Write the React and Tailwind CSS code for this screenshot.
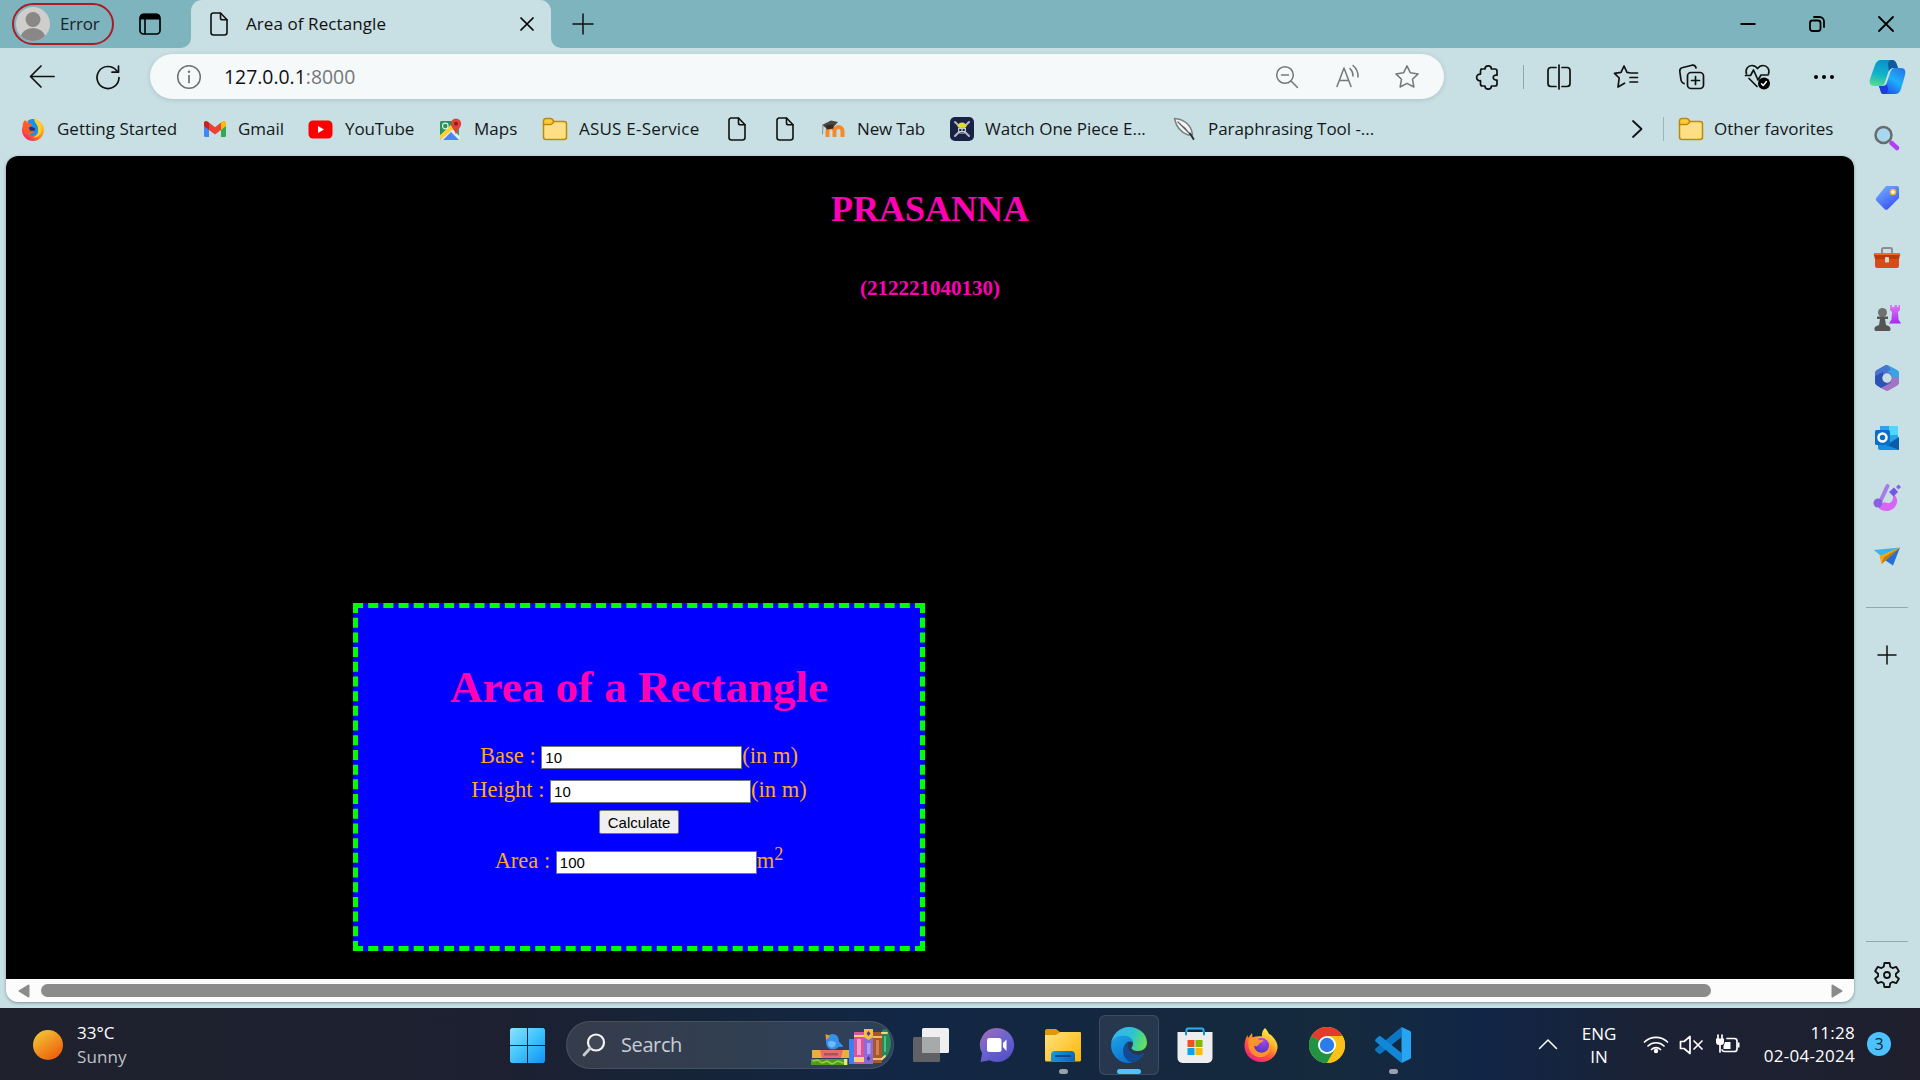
import React from "react";

/* ---------- small helpers ---------- */
function Svg({ w, h = w, vb, className = "", children }) {
  return (
    <svg
      width={w}
      height={h}
      viewBox={vb || `0 0 ${w} ${h}`}
      className={"shrink-0 " + className}
      fill="none"
      stroke="none"
      strokeLinecap="round"
      strokeLinejoin="round"
    >
      {children}
    </svg>
  );
}

/* ---------- browser glyphs ---------- */
const DocIcon = ({ className }) => (
  <Svg w={20} h={26} className={className}>
    <path d="M4 2h7.5L18 8.8V21.500a2.500 2.500 0 0 1-2.500 2.500h-11A2.500 2.500 0 0 1 2 21.500V4.500A2.500 2.500 0 0 1 4 2z" stroke="#111" strokeWidth="1.600" />
    <path d="M11.500 2.200V7A1.800 1.800 0 0 0 13.300 8.800H18" stroke="#111" strokeWidth="1.600" />
  </Svg>
);

const FolderIcon = ({ className }) => (
  <Svg w={26} h={24} className={className}>
    <rect x="1.500" y="4.500" width="23" height="18" rx="2.500" fill="#ffdf85" stroke="#bd8b0b" strokeWidth="1.500" />
    <path d="M1.500 7.500V4A2.500 2.500 0 0 1 4 1.500h4.500a2.500 2.500 0 0 1 2 1l1.500 2-2 2.300a2.500 2.500 0 0 1-1.800.7z" fill="#ffca38" stroke="#bd8b0b" strokeWidth="1.500" />
  </Svg>
);

const FirefoxIcon = ({ size, id, className }) => (
  <Svg w={size} vb="0 0 36 36" className={className}>
    <defs>
      <linearGradient id={id + "a"} x1="28" y1="4" x2="8" y2="34" gradientUnits="userSpaceOnUse">
        <stop offset="0" stopColor="#fff04a" />
        <stop offset=".3" stopColor="#ffb52e" />
        <stop offset=".6" stopColor="#ff5a36" />
        <stop offset="1" stopColor="#f3188b" />
      </linearGradient>
      <radialGradient id={id + "b"} cx="20" cy="13" r="12" gradientUnits="userSpaceOnUse">
        <stop offset="0" stopColor="#a54bf0" />
        <stop offset="1" stopColor="#5a35c8" />
      </radialGradient>
    </defs>
    <path d="M22 1c2 2 3 4 4 6 1 0 2 1 3 2 4 4 6 8 5.500 12C33.500 29 27 35 18.500 35 9 35 1.500 28 1.500 19c0-4 1-8 3-11l.5 3 4-5 .5 4.500c1.500-1 3-1 4.500-1 2-.5 4-.5 5 0-.5-3 .5-6 3-8.500z" fill={`url(#${id}a)`} />
    <circle cx="18.500" cy="18.500" r="7.500" fill={`url(#${id}b)`} />
    <path d="M6 12c3-2 6-2 8.500 0 2 .8 4 .5 6 1.200-1 2-3 2.500-4.500 3.500-1 3.500-4 2.500-5 2 0 4 3.500 7 7.500 7 5 0 9-4 8-9.500 3 7-1.500 14-9 14C9.500 30 3 22 6 12z" fill="#ff9a2a" opacity=".9" />
  </Svg>
);

const OldFirefoxIcon = () => (
  <Svg w={24} h={25} vb="0 0 24 25" className="ml-[21px]">
    <defs>
      <linearGradient id="offa" x1="20" y1="3" x2="4" y2="22" gradientUnits="userSpaceOnUse">
        <stop offset="0" stopColor="#ffd93a" />
        <stop offset=".5" stopColor="#ff8a1c" />
        <stop offset="1" stopColor="#f21d6d" />
      </linearGradient>
    </defs>
    <circle cx="12" cy="13" r="11" fill="url(#offa)" />
    <path d="M7 4C11 0 18 2 19 9c0 5-2 9-7 10-4 0-6-3-5-6z" fill="#1592f0" />
    <path d="M13 1c4 2 8 6 7.500 12-.5 5-4 8-9 7.500 4-1 6-4 5.500-7.500C18 8 13 6 13 1z" fill="#ffcf2e" />
    <path d="M2 6l2-3 2 3c2 0 4 0 5 2-1 1-1.500 2-3.500 2 0 3 2 4 5 3.500 1 1.500-1 4-4 4C4 17 1 13 2 6z" fill="#ff5a28" />
    <path d="M8 11c1-1.500 3-1.500 4-.5 2 0 2.500 1.500 2 3-2-.5-3 1-5 0z" fill="#24337c" />
  </Svg>
);

const GmailIcon = () => (
  <Svg w={24} h={18} className="ml-[25px]">
    <path d="M1 3v12.500A1.500 1.500 0 0 0 2.500 17H6V7z" fill="#4285f4" />
    <path d="M23 3v12.500a1.500 1.500 0 0 1-1.500 1.500H18V7z" fill="#34a853" />
    <path d="M18 2.500l2-1.200c1.500-1 3 0 3 1.700V6l-5 4z" fill="#fbbc04" />
    <path d="M6 2.500L4 1.300C2.500.3 1 1.300 1 3v3l5 4z" fill="#c5221f" />
    <path d="M6 2.500l6 4.700 6-4.700V10l-6 4.600L6 10z" fill="#ea4335" />
  </Svg>
);

const YouTubeIcon = () => (
  <Svg w={25} h={19} className="ml-[24px]">
    <rect x=".5" y=".5" width="24" height="18" rx="4.500" fill="#f00" />
    <path d="M10 6v7l6-3.500z" fill="#fff" />
  </Svg>
);

const MapsIcon = () => (
  <Svg w={23} h={23} className="ml-[25px]">
    <rect x="1" y="3" width="19" height="19" rx="2" fill="#34a853" />
    <path d="M1.500 21.500L13 10l8 9v1a2 2 0 0 1-2 2H3z" fill="#e9edf0" />
    <path d="M4 22l8-8 8 8z" fill="#4a86f5" />
    <path d="M1 17L16 3l3 4L2 21.500A2 2 0 0 1 1 20z" fill="#ffcf34" />
    <path d="M1 5a2 2 0 0 1 2-2h13L1 17z" fill="#23965a" />
    <circle cx="6.300" cy="8" r="2.800" stroke="#dff1e6" strokeWidth="1.200" />
    <path d="M17 .5a5.200 5.200 0 0 1 5.200 5.200c0 3.500-4.200 6-5.200 11-1-5-5.200-7.500-5.200-11A5.200 5.200 0 0 1 17 .5z" fill="#e0433a" />
    <circle cx="17" cy="5.700" r="1.900" fill="#8c1c17" />
  </Svg>
);

const MoodleIcon = () => (
  <Svg w={25} h={20} className="ml-[26px]">
    <path d="M6.500 18v-6a3.300 3.300 0 0 1 7 0v6m0-6a3.700 3.700 0 0 1 8 0v6" stroke="#f58a2c" strokeWidth="4" strokeLinecap="butt" />
    <path d="M1 6l9-4.500L17 3l-5 5.500-7 .5z" fill="#4b4541" />
    <path d="M5 6.500l7-1 .5 4-7 1z" fill="#2e2a28" />
    <path d="M2 6.500L1.500 15" stroke="#9b8d80" strokeWidth="1" />
  </Svg>
);

const PirateIcon = () => (
  <Svg w={24} h={24} className="ml-[25px]">
    <rect width="24" height="24" rx="5" fill="#182244" />
    <path d="M5 5l14 14M19 5L5 19" stroke="#b4b9bf" strokeWidth="2" />
    <path d="M8 9a4 3.500 0 0 1 8 0l.8 1H7.200z" fill="#e5dc33" />
    <path d="M8 10.500h8v3.500L14 17h-4l-2-3z" fill="#c9cdd0" />
    <path d="M10 13h.6m2.800 0h.6" stroke="#182244" strokeWidth="2" />
    <path d="M10.500 16h3" stroke="#182244" strokeWidth="1" />
  </Svg>
);

const QuillIcon = () => (
  <Svg w={23} h={24} className="ml-[26px]">
    <path d="M1.500 1.500C10 2 18 7 19.500 17.500L15 18C7 15 3 9 1.500 1.500z" fill="#f4f6f6" stroke="#7b8082" strokeWidth="1.500" />
    <path d="M5 5l14 14M8 8c3 2 5 4 7 7" stroke="#5c6163" strokeWidth="1.300" />
    <path d="M17 16.500l3.500 5.500" stroke="#2e3234" strokeWidth="2" />
  </Svg>
);

/* ---------- tab strip ---------- */
function TabStrip() {
  return (
    <header className="flex h-12 shrink-0 items-center bg-[#7eb4be]">
      <div className="ml-[12px] flex h-[42px] w-[102px] shrink-0 items-center rounded-full border-2 border-[#ab1d26]">
        <Svg w={34} vb="0 0 34 34" className="ml-[2px]">
          <defs>
            <clipPath id="face"><circle cx="17" cy="17" r="17" /></clipPath>
          </defs>
          <circle cx="17" cy="17" r="17" fill="#d0cecc" />
          <g clipPath="url(#face)" fill="#8a8886">
            <circle cx="17" cy="12.500" r="7.500" />
            <ellipse cx="17" cy="30" rx="12" ry="9" />
          </g>
        </Svg>
        <span className="ml-[10px] text-[17px] tracking-[-0.2px] text-[#202124]">Error</span>
      </div>
      <Svg w={22} h={22} className="ml-[25px]">
        <rect x="1" y="1.500" width="20" height="19.500" rx="3.500" stroke="#000" strokeWidth="1.700" />
        <path d="M1 6.500V4a3.500 3.500 0 0 1 3.500-3.500h13A3.500 3.500 0 0 1 21 4v2.500z" fill="#000" />
        <path d="M6 6v14.500" stroke="#000" strokeWidth="1.600" />
      </Svg>
      <div className="ml-[20px] flex h-12 w-[380px] shrink-0">
        <div className="w-[10px] bg-[#c8dfe3]"><div className="h-12 rounded-br-[10px] bg-[#7eb4be]" /></div>
        <div className="flex h-12 w-[360px] items-center rounded-t-[11px] bg-[#c8dfe3]">
          <DocIcon className="ml-[18px]" />
          <span className="ml-[17px] w-[274px] text-[17px] tracking-[0.08px] text-[#111]">Area of Rectangle</span>
          <Svg w={14}><path d="M1 1l12 12M13 1L1 13" stroke="#000" strokeWidth="1.700" /></Svg>
        </div>
        <div className="w-[10px] bg-[#c8dfe3]"><div className="h-12 rounded-bl-[10px] bg-[#7eb4be]" /></div>
      </div>
      <Svg w={22} className="ml-[11px]"><path d="M11 1v20M1 11h20" stroke="#111" strokeWidth="1.500" /></Svg>
      <div className="mr-[26px] ml-auto flex items-center gap-[53px]">
        <Svg w={16}><path d="M.5 8h15" stroke="#000" strokeWidth="2" strokeLinecap="butt" /></Svg>
        <Svg w={16}>
          <rect x="1" y="4.500" width="10.500" height="10.500" rx="2.500" stroke="#000" strokeWidth="1.800" />
          <path d="M5 1h5.500A4.500 4.500 0 0 1 15 5.500V11" stroke="#000" strokeWidth="1.800" />
        </Svg>
        <Svg w={16}><path d="M1 1l14 14M15 1L1 15" stroke="#000" strokeWidth="1.800" /></Svg>
      </div>
    </header>
  );
}

/* ---------- address bar row ---------- */
function Toolbar() {
  return (
    <div className="flex h-[57px] shrink-0 items-center">
      <Svg w={26} className="ml-[29px]"><path d="M12 2L1.500 12.500 12 23M2 12.500h23" stroke="#111" strokeWidth="1.700" /></Svg>
      <Svg w={26} className="ml-[40px]">
        <path d="M24 13.500A11 11 0 1 1 21.500 6.500L23 8" stroke="#111" strokeWidth="1.700" />
        <path d="M23.500 2v6.200H17" stroke="#111" strokeWidth="1.700" />
      </Svg>
      <div className="ml-[29px] flex h-[45px] w-[1294px] shrink-0 items-center rounded-full bg-[#f5f9fa] shadow-[0_1px_4px_rgba(70,120,130,0.25)]">
        <Svg w={26} className="ml-[26px]">
          <circle cx="13" cy="13" r="11.300" stroke="#6d7072" strokeWidth="1.500" />
          <path d="M13 11.500v7" stroke="#6d7072" strokeWidth="1.700" />
          <circle cx="13" cy="7.800" r="1.200" fill="#6d7072" />
        </Svg>
        <span className="ml-[22px] text-[19.400px] text-[#111]">127.0.0.1<span className="text-[#75787a]">:8000</span></span>
        <div className="mr-[24px] ml-auto flex items-center">
          <Svg w={24}>
            <circle cx="10" cy="10" r="8.300" stroke="#75787a" strokeWidth="1.500" />
            <path d="M6.500 10h7M16 16l6.500 6.500" stroke="#75787a" strokeWidth="1.500" />
          </Svg>
          <Svg w={26} className="ml-[36px]">
            <path d="M2 22.500L9 4 16 22.500M4.300 16.500h9.500" stroke="#75787a" strokeWidth="1.500" />
            <path d="M15 4.500A10 10 0 0 1 18 12M18 1.500A14 14 0 0 1 23 13" stroke="#75787a" strokeWidth="1.500" />
          </Svg>
          <Svg w={26} className="ml-[33px]">
            <path d="M13 1.800l3.400 7 7.700 1.100-5.600 5.400 1.400 7.700L13 19.300 6.100 23l1.400-7.700L1.900 9.900l7.700-1.100z" stroke="#75787a" strokeWidth="1.500" />
          </Svg>
        </div>
      </div>
      <Svg w={26} className="ml-[31px]">
        <path d="M6 5h4a3.200 3.200 0 1 1 6.400 0H20a2 2 0 0 1 2 2v4.200c-5-1-5 5.600 0 4.800V20a2 2 0 0 1-2 2h-3.600a3.200 3.200 0 1 1-6.400 0H7.500a2 2 0 0 1-2-2v-3.300a3.300 3.300 0 1 1 0-6.500V7A2 2 0 0 1 7 5" stroke="#111" strokeWidth="1.700" />
      </Svg>
      <div className="ml-[22px] h-6 w-px bg-[#8fa6ab]" />
      <Svg w={26} className="ml-[22px]">
        <path d="M10 3.500H5A3 3 0 0 0 2 6.500v13a3 3 0 0 0 3 3h5M16 3.500h5a3 3 0 0 1 3 3v13a3 3 0 0 1-3 3h-5M13 1v24" stroke="#111" strokeWidth="1.700" />
      </Svg>
      <Svg w={26} className="ml-[41px]">
        <path d="M18 9l-4-.6L11 2 8 8.400l-6.500 1L6.200 14 5 23l6.500-3.800M17 13.500h7.500M17 18h7.500M19 9h5.500M6.200 14" stroke="#111" strokeWidth="1.700" />
      </Svg>
      <Svg w={28} className="ml-[39px]">
        <rect x="9.500" y="9.500" width="16" height="16" rx="3.500" stroke="#111" strokeWidth="1.700" />
        <path d="M17.500 13.500v8M13.500 17.500h8M6 20.500l-1-.5a4 4 0 0 1-2-3L1.800 8.500a3.500 3.500 0 0 1 3-4L14 2.200a3.500 3.500 0 0 1 4 2.800" stroke="#111" strokeWidth="1.700" />
      </Svg>
      <Svg w={28} className="ml-[38px]">
        <path d="M2.500 11C1 6 4 2.500 8 2.500c2.500 0 4 1 5.500 3C15 3.500 16.500 2.500 19 2.500c4 0 7 3.500 5.500 8.500M5 15.500l8 8" stroke="#111" strokeWidth="1.700" />
        <path d="M1.500 12.500h5L9.500 7l4.500 10 3-5h7" stroke="#111" strokeWidth="1.700" />
        <circle cx="20" cy="20.500" r="6" fill="#000" />
        <path d="M17.500 20.800l1.700 1.700 3.200-4" stroke="#fff" strokeWidth="1.500" />
      </Svg>
      <Svg w={22} h={6} className="ml-[41px]"><g fill="#000"><circle cx="3" cy="3" r="2" /><circle cx="11" cy="3" r="2" /><circle cx="19" cy="3" r="2" /></g></Svg>
    </div>
  );
}

/* ---------- favourites bar ---------- */
function Bookmarks() {
  return (
    <div className="flex h-[51px] shrink-0 items-center pb-[3px] text-[17px] whitespace-nowrap text-[#15181a]">
      <OldFirefoxIcon />
      <span className="ml-[12px] w-[121px]">Getting Started</span>
      <GmailIcon />
      <span className="ml-[11px] w-[46px]">Gmail</span>
      <YouTubeIcon />
      <span className="ml-[12px] w-[69px] tracking-[-0.1px]">YouTube</span>
      <MapsIcon />
      <span className="ml-[12px] w-[44px]">Maps</span>
      <FolderIcon className="ml-[24px]" />
      <span className="ml-[11px] w-[121px] tracking-[0.22px]">ASUS E-Service</span>
      <DocIcon className="ml-[27px]" />
      <DocIcon className="ml-[28px]" />
      <MoodleIcon />
      <span className="ml-[11px] w-[68px] tracking-[-0.15px]">New Tab</span>
      <PirateIcon />
      <span className="ml-[11px] w-[162px]">Watch One Piece E...</span>
      <QuillIcon />
      <span className="ml-[12px] w-[166px] tracking-[-0.05px]">Paraphrasing Tool -...</span>
      <Svg w={12} h={20} className="ml-[257px]"><path d="M2 2l8.500 8L2 18" stroke="#111" strokeWidth="1.800" /></Svg>
      <div className="ml-[20px] h-6 w-px bg-[#9fb4b8]" />
      <FolderIcon className="ml-[14px]" />
      <span className="ml-[10px]">Other favorites</span>
    </div>
  );
}

/* ---------- web page ---------- */
function Field({ label, value, unit }) {
  return (
    <div className="flex items-baseline justify-center">
      <span className="whitespace-pre">{label + " : "}</span>
      <input
        readOnly
        value={value}
        className="h-[23px] w-[201px] border border-[#767676] bg-white px-[3px] font-['Liberation_Sans',sans-serif] text-[15px] leading-[21px] text-black"
      />
      {unit}
    </div>
  );
}

function WebPage() {
  return (
    <div className="flex min-h-0 flex-1 flex-col overflow-hidden rounded-xl bg-[#fcfcfc] [font-family:'Liberation_Serif',serif] shadow-[0_1px_3px_rgba(40,80,90,0.5)]">
      <div className="h-[823px] shrink-0 bg-black">
        <h1 className="pt-[33px] text-center text-[36px] leading-[41px] font-bold text-[#ff00b4]">PRASANNA</h1>
        <h3 className="mt-[46px] text-center text-[21px] leading-6 font-bold text-[#ff00b4]">(212221040130)</h3>
        <section className="mt-[303px] ml-[347px] h-[348px] w-[572px] border-[5px] border-dashed border-[#0f0] bg-[#00f] text-[22.500px] leading-[26px] text-[#ffa81e]">
          <h1 className="mt-[53px] text-center text-[45px] leading-[52px] font-bold text-[#ff00b4]">Area of a Rectangle</h1>
          <div className="mt-[30px]"><Field label="Base" value="10" unit="(in m)" /></div>
          <div className="mt-[8px]"><Field label="Height" value="10" unit="(in m)" /></div>
          <div className="mt-[7px] flex justify-center">
            <button className="h-[24px] w-[80px] rounded-[2px] border border-[#767676] bg-[#efefef] font-['Liberation_Sans',sans-serif] text-[15px] leading-[21px] text-black">Calculate</button>
          </div>
          <div className="mt-[14px]">
            <Field label="Area" value="100" unit={<span>m<span className="relative -top-[8px] text-[18px] leading-none">2</span></span>} />
          </div>
        </section>
      </div>
      <div className="flex h-[23px] shrink-0 items-center">
        <Svg w={12} h={14} className="ml-[12px]"><path d="M10.500 1.500v11L1.500 7z" fill="#8b8b8b" stroke="#8b8b8b" strokeWidth="2" /></Svg>
        <div className="ml-[11px] h-[13px] w-[1670px] shrink-0 rounded-full bg-[#8b8b8b]" />
        <Svg w={12} h={14} className="mr-[11px] ml-auto"><path d="M1.500 1.500v11l9-5.500z" fill="#8b8b8b" stroke="#8b8b8b" strokeWidth="2" /></Svg>
      </div>
    </div>
  );
}

/* ---------- Edge sidebar ---------- */
const sidebarIcons = [
  <g key="search">
    <path d="M18.500 19l5.500 5" stroke="#b43df5" strokeWidth="4.500" />
    <circle cx="10.500" cy="11" r="8" fill="#a6d8f0" stroke="#6b6b6b" strokeWidth="2.500" />
  </g>,
  <g key="tag">
    <path d="M13 2h11a2 2 0 0 1 2 2v10L15 25a2.500 2.500 0 0 1-3.500 0l-8-8a2.500 2.500 0 0 1 0-3.500z" fill="url(#sbTag)" />
    <circle cx="20" cy="8" r="2.500" fill="#fff" stroke="#f3bd1c" strokeWidth="1.600" />
  </g>,
  <g key="tools">
    <path d="M9 9V5.500A1.500 1.500 0 0 1 10.500 4h7A1.500 1.500 0 0 1 19 5.500V9" stroke="#8c8f91" strokeWidth="2" />
    <path d="M2 14h24v8a2 2 0 0 1-2 2H4a2 2 0 0 1-2-2z" fill="#d84b18" />
    <path d="M2 9h24a1.500 1.500 0 0 1 1.200 1.500L26 15H2L.8 10.500A1.500 1.500 0 0 1 2 9z" fill="#ba3b0c" />
    <path d="M1 9h26v2H1z" fill="#ee6a26" />
    <rect x="12" y="13" width="4" height="5.500" rx="1" fill="#d5d5d5" />
  </g>,
  <g key="games">
    <path d="M17 1h2v2h2.500V1H24v2h1.500V1H27v5l-2 2 .5 7.500 2.500 4H16l2.500-4L19 8l-2-2z" fill="url(#sbRook)" />
    <circle cx="9.500" cy="8.500" r="4.500" fill="#707070" />
    <path d="M4 12.500h11v2.500h-3l1 6c3 1 5 2 4.500 4.500a1.500 1.500 0 0 1-1.500 1.500H3a1.500 1.500 0 0 1-1.500-1.500C1 23 3 22 6 21l1-6H4z" fill="#555" />
  </g>,
  <g key="m365">
    <path d="M14 1l9.500 5A4 4 0 0 1 26 9.500v8.500a4 4 0 0 1-2 3.500L16 26a4 4 0 0 1-4 0l-8-4.500A4 4 0 0 1 2 18V9.500A4 4 0 0 1 4 6l8-4.500a4 4 0 0 1 2-.5z" fill="#6a62bd" />
    <path d="M12 1.500a4 4 0 0 1 3.500 0L24 6a4 4 0 0 1 2 3.500V16l-7-2.500-1-4-4.500-2z" fill="#38a4e6" />
    <path d="M12 1.500L4 6a4 4 0 0 0-2 3.500V18l5 2.500 3-2V10l8-4.500-4-4.500z" fill="#4576d2" />
    <path d="M2 12v6a4 4 0 0 0 2 3.500L8 24l7-4-5-3V8z" fill="#2f53b5" />
    <path d="M26 14v4a4 4 0 0 1-2 3.500L16 26a4 4 0 0 1-4 0l-4-2 10-5 1-6z" fill="#a374c4" />
    <circle cx="14" cy="14" r="4.700" fill="#c8dfe3" />
  </g>,
  <g key="outlook">
    <rect x="7" y="2" width="18" height="20" fill="#27a7ea" />
    <path d="M16 2h9v9h-9z" fill="#4fd8ff" />
    <path d="M5 13l11 6 10-6v13H7a2 2 0 0 1-2-2z" fill="#168de0" />
    <path d="M26 13L14 21l12 5z" fill="#0b5ca8" />
    <rect x="2" y="6" width="15" height="15" rx="1.500" fill="#0870c9" />
    <circle cx="9.500" cy="13.500" r="4" stroke="#fff" strokeWidth="2.500" />
  </g>,
  <g key="designer">
    <path d="M20 10c7 4 5 15-5 17-6 .5-10-2-11-7 6 2 6-4 10-1 4 1 7-3 6-9z" fill="#d766f4" />
    <path d="M14.500 2L7.500 17" stroke="#a57ce8" strokeWidth="4" />
    <circle cx="5" cy="19" r="4.500" fill="#8a5fe0" />
    <path d="M21 3.500l4 4.500-4.500 4.500-4.500-4.500z" fill="#7656e8" />
    <path d="M25.500.5L28 3l-2.500 2.500L23 3z" fill="#8363ef" />
  </g>,
  <g key="drop">
    <path d="M1 6l26-2.500L8 12z" fill="#39b5ee" />
    <path d="M27 3.500L20 21.500l-9-6z" fill="#2470d8" />
    <path d="M27 3.500L6.500 12 8.500 20l4.500-4z" fill="#f4a60e" />
    <path d="M11 13.500L27 3.500 13 16l-4.500 4z" fill="#c47a0a" />
  </g>,
];

function Sidebar() {
  return (
    <aside className="flex w-[60px] shrink-0 flex-col items-center pr-[6px]">
      <Svg w={38} h={36} className="mt-[11px] ml-[2px]" vb="0 0 38 36">
        <defs>
          <linearGradient id="cpA" x1="14" y1="1" x2="8" y2="28" gradientUnits="userSpaceOnUse">
            <stop offset="0" stopColor="#0a8fd0" /><stop offset=".55" stopColor="#12b5c8" /><stop offset="1" stopColor="#5edc8b" />
          </linearGradient>
          <linearGradient id="cpB" x1="34" y1="8" x2="16" y2="34" gradientUnits="userSpaceOnUse">
            <stop offset="0" stopColor="#2a6fe4" /><stop offset=".5" stopColor="#1eb0fb" /><stop offset="1" stopColor="#1d4ede" />
          </linearGradient>
          <linearGradient id="sbTag" x1="4" y1="4" x2="18" y2="26" gradientUnits="userSpaceOnUse">
            <stop offset="0" stopColor="#6fb0ff" /><stop offset="1" stopColor="#3b50f2" />
          </linearGradient>
          <linearGradient id="sbRook" x1="20" y1="1" x2="22" y2="20" gradientUnits="userSpaceOnUse">
            <stop offset="0" stopColor="#df7bf5" /><stop offset="1" stopColor="#a723f2" />
          </linearGradient>
        </defs>
        <path d="M12 1h11c3 0 4 2 5 5l1 3h-5c-3 0-4 2-5 5l-3 9c-1 3-2 4-5 4H5c-4 0-5-3-4-7L6 6c1-3 3-5 6-5z" fill="url(#cpA)" />
        <path d="M23 1c3 0 4 2 5 5l1 3h-5c-2 0-3 1-4 3l-1-6c0-3 1-5 4-5z" fill="#10599c" />
        <path d="M26 35H15c-3 0-3-2-4-5l-1-3c5 0 7 0 8-4l3-9c1-3 2-5 5-5h6c4 0 5 3 4 7l-4 14c-1 3-3 5-6 5z" fill="url(#cpB)" />
        <path d="M15 35c-3 0-3-2-4-5l-1-3h4c2 0 3 0 4-2l1 5c0 3-1 5-4 5z" fill="#1c3fd0" />
      </Svg>
      <div className="mt-[29px] flex flex-col items-center gap-[32px] pr-px">
        {sidebarIcons.map((icon) => (
          <Svg key={icon.key} w={28}>{icon}</Svg>
        ))}
      </div>
      <div className="mt-[35px] h-px w-[42px] shrink-0 bg-[#93a9ae]" />
      <Svg w={20} className="mt-[37px] mr-px"><path d="M10 1v18M1 10h18" stroke="#111" strokeWidth="1.500" /></Svg>
      <div className="mt-auto h-px w-[42px] shrink-0 bg-[#93a9ae]" />
      <Svg w={28} vb="0 0 28 28" className="mt-[19px] mb-[19px]">
        <path d="M11.400 2h5.200l.7 3.800 2.200 1.300L23.200 5.800l2.700 4.500-3 2.500v2.500l3 2.400-2.700 4.500-3.700-1.300-2.200 1.300-.7 3.800h-5.200l-.7-3.800-2.200-1.300-3.700 1.300-2.700-4.500 3-2.400v-2.500l-3-2.500 2.700-4.500 3.700 1.300 2.200-1.300z" stroke="#111" strokeWidth="1.800" />
        <circle cx="14" cy="14" r="3" stroke="#111" strokeWidth="1.800" />
      </Svg>
    </aside>
  );
}

/* ---------- Windows taskbar ---------- */
const Books = () => (
  <Svg w={82} h={38} vb="0 0 82 38" className="mt-[3px] mr-[1px] ml-auto">
    <path d="M1 31h37v6H1z" fill="#4e9a22" />
    <path d="M3 33l5-1 4 3 5-2 5 3 6-3 5 2" stroke="#8bd53c" strokeWidth="1.500" />
    <path d="M34 31h3v6h-3z" fill="#f2dd90" />
    <path d="M2 22h37v8H2z" fill="#e8b13c" />
    <path d="M10 22h23l-2 8H12z" fill="#e96a72" />
    <path d="M14 25h14v2.500H14z" fill="#9b5a55" />
    <path d="M16 14c-.5-4 2-8 6.500-8C27 6 29 9.500 29 13.500c1 1.500 2.500 3 4.500 4.500-2 1.500-4 1-5 1-1 1.500-3.500 2.500-6 2.500-4 0-6.500-3-6.500-7.500z" fill="#358fea" />
    <path d="M18 15c1-3 5-3 8 0 0 3-3 5-5 4.500S18 17 18 15z" fill="#6cb9fb" />
    <path d="M15.500 6l4.500 2-4 4z" fill="#f39b22" />
    <rect x="39" y="11" width="5" height="25" fill="#3c7ff0" />
    <rect x="44" y="4" width="10" height="32" fill="#d9549c" />
    <path d="M44 7h10v2H44zM44 29h10v5H44z" fill="#f6cf77" />
    <rect x="47" y="11" width="4" height="16" fill="#f0a1cb" />
    <rect x="54" y="1" width="9" height="35" fill="#8a6bd8" />
    <path d="M54 1h9v8l-4.500 3L54 9z" fill="#f2c23a" />
    <path d="M58.500 3l2 2.500-2 2.500-2-2.500zM58.500 28l2 2.500-2 2.500-2-2.500z" fill="#533894" />
    <rect x="57" y="15" width="3.500" height="11" fill="#b79df0" />
    <rect x="63" y="4" width="9" height="31" fill="#a9562b" />
    <path d="M63 8h9v2h-9zM63 30h9v2h-9z" fill="#efbb6c" />
    <rect x="66" y="12" width="3" height="15" fill="#d4804f" />
    <path d="M72 2l4-1c3 3 5 9 5 14 0 7-3 12-6 15l-3 1z" fill="#27885a" />
    <path d="M72 5h5M72 31l3-3" stroke="#e6dc8f" strokeWidth="2" />
    <path d="M75 9v14" stroke="#4fbf86" strokeWidth="2" />
  </Svg>
);

function AppSlot({ active, indicator, children }) {
  return (
    <div className={"relative flex h-[60px] w-[60px] shrink-0 items-center justify-center rounded-md " + (active ? "border border-white/10 bg-white/[0.08]" : "")}>
      {children}
      {indicator === "wide" && <div className="absolute bottom-0 h-[5px] w-6 rounded-full bg-[#4cc2ff]" />}
      {indicator === "dot" && <div className="absolute bottom-[1px] h-[5px] w-[9px] rounded-full bg-[#9aa1ab]" />}
    </div>
  );
}

function Taskbar() {
  return (
    <footer className="flex h-[72px] shrink-0 items-center bg-[linear-gradient(90deg,#1f212d_0%,#1d2030_25%,#162438_36%,#122745_47%,#14273f_58%,#152a3d_70%,#112647_77%,#1b2234_86%,#1f1f2d_100%)] pt-[2px] text-white">
      <Svg w={30} className="ml-[33px]">
        <defs>
          <linearGradient id="sun" x1="5" y1="3" x2="22" y2="27" gradientUnits="userSpaceOnUse">
            <stop offset="0" stopColor="#f2c035" /><stop offset="1" stopColor="#ee650c" />
          </linearGradient>
        </defs>
        <circle cx="15" cy="15" r="15" fill="url(#sun)" />
      </Svg>
      <div className="ml-[14px] w-[433px] text-[17px] leading-6">
        <div>33°C</div>
        <div className="tracking-[0.1px] text-[#bfc2c8]">Sunny</div>
      </div>
      <Svg w={35}>
        <defs>
          <linearGradient id="win" x1="0" y1="0" x2="35" y2="35" gradientUnits="userSpaceOnUse">
            <stop offset="0" stopColor="#8be2ff" /><stop offset=".5" stopColor="#3fc3fb" /><stop offset="1" stopColor="#0d93f7" />
          </linearGradient>
        </defs>
        <path d="M1.500 0H17v17H0V1.500zM18 0h15.500L35 1.500V17H18zM0 18h17v17H1.500L0 33.500zM18 18h17v15.500L33.500 35H18z" fill="url(#win)" />
      </Svg>
      <div className="ml-[21px] flex h-12 w-[328px] shrink-0 items-center rounded-full border border-white/10 bg-white/[0.12]">
        <Svg w={24} className="ml-[15px]">
          <circle cx="14" cy="9.500" r="8" fill="#ffffff10" stroke="#f2f3f5" strokeWidth="2.200" />
          <path d="M8 15.500L2 22" stroke="#c9ccd2" strokeWidth="2.800" />
        </Svg>
        <span className="ml-[15px] text-[20px] tracking-[-0.4px] text-[#c9ced6]">Search</span>
        <Books />
      </div>
      <div className="ml-[7px] flex items-center gap-[6px]">
        <AppSlot>
          <Svg w={36}>
            <rect x="9" y="1" width="27" height="25" rx="1.500" fill="#efefef" />
            <rect y="10" width="27" height="25" rx="1.500" fill="#5f6164" />
            <path d="M9 10h18v16H9z" fill="#a8a9aa" />
          </Svg>
        </AppSlot>
        <AppSlot>
          <Svg w={36}>
            <defs>
              <linearGradient id="chat" x1="4" y1="4" x2="24" y2="34" gradientUnits="userSpaceOnUse">
                <stop offset="0" stopColor="#9d6ab8" /><stop offset=".5" stopColor="#6b64cf" /><stop offset="1" stopColor="#5552c8" />
              </linearGradient>
            </defs>
            <path d="M18 1a17 17 0 1 1-7.500 32.200L1.500 35l1.700-8.500A17 17 0 0 1 18 1z" fill="url(#chat)" />
            <rect x="8" y="11" width="14.500" height="14" rx="2.500" fill="#fff" />
            <path d="M24 16l3.500-3.500V24L24 20z" fill="#fff" />
          </Svg>
        </AppSlot>
        <AppSlot indicator="dot">
          <Svg w={36}>
            <defs>
              <linearGradient id="fold" x1="3" y1="6" x2="30" y2="34" gradientUnits="userSpaceOnUse">
                <stop offset="0" stopColor="#ffe07a" /><stop offset="1" stopColor="#fcb90d" />
              </linearGradient>
              <linearGradient id="foldB" x1="6" y1="25" x2="30" y2="35" gradientUnits="userSpaceOnUse">
                <stop offset="0" stopColor="#169ae2" /><stop offset="1" stopColor="#0b62b4" />
              </linearGradient>
            </defs>
            <path d="M0 4a2 2 0 0 1 1.500-2H11l4 3-3 3H0z" fill="#df9a03" />
            <path d="M0 8h11l4-3h20a1 1 0 0 1 1 1v27a1.500 1.500 0 0 1-1.500 1.500h-33A1.500 1.500 0 0 1 0 33z" fill="url(#fold)" />
            <path d="M6 34.500V28a4 4 0 0 1 4-4h16a4 4 0 0 1 4 4v6.500z" fill="url(#foldB)" />
            <path d="M11 29h14" stroke="#0a4a8c" strokeWidth="2" />
          </Svg>
        </AppSlot>
        <AppSlot active indicator="wide">
          <Svg w={36}>
            <defs>
              <linearGradient id="edA" x1="2" y1="8" x2="35" y2="20" gradientUnits="userSpaceOnUse">
                <stop offset="0" stopColor="#3bb4f1" /><stop offset=".5" stopColor="#2bc3d2" /><stop offset="1" stopColor="#6be34e" />
              </linearGradient>
              <linearGradient id="edB" x1="3" y1="12" x2="16" y2="35" gradientUnits="userSpaceOnUse">
                <stop offset="0" stopColor="#1b9de2" /><stop offset="1" stopColor="#0b72d1" />
              </linearGradient>
            </defs>
            <path d="M0 17C1 7 9 0 18 0c10 0 18 7 18 15.500 0 5-4 8.500-9 8.500-4 0-6.500-1.500-6.500-3 0-1 1.500-1.500 1.500-4.500 0-4-4-7-9.500-7C6 9.500 1 13 0 17z" fill="url(#edA)" />
            <path d="M0 18C1 12 6 8.500 12 8.500c6 0 10 3.500 10 7.500-2-2-5-2-7.500 1C11 21 12 31 21 35.700 10 38 0 29 0 18z" fill="url(#edB)" />
            <path d="M17 15c-7 4-7 17 4 20.800 5-.8 9-4 12-8 .5-1-.3-1.500-1.300-1-7 3-14-1-14.700-7z" fill="#124b93" />
          </Svg>
        </AppSlot>
        <AppSlot>
          <Svg w={36}>
            <path d="M9.500 7V3a1.500 1.500 0 0 1 1.500-1.500h14A1.500 1.500 0 0 1 26.500 3v4" stroke="#29b1f1" strokeWidth="2" />
            <path d="M.5 5h35v26a5 5 0 0 1-5 5h-25a5 5 0 0 1-5-5z" fill="#eeeeef" />
            <path d="M9 5v2.500M27 5v2.500" stroke="#1491d3" strokeWidth="2" />
            <path d="M10.500 13h7v7h-7z" fill="#f05022" />
            <path d="M18.500 13h7v7h-7z" fill="#7fb900" />
            <path d="M10.500 21h7v7h-7z" fill="#05a4ef" />
            <path d="M18.500 21h7v7h-7z" fill="#feb903" />
          </Svg>
        </AppSlot>
        <AppSlot><FirefoxIcon size={36} id="ffTask" /></AppSlot>
        <AppSlot>
          <Svg w={36}>
            <circle cx="18" cy="18" r="18" fill="#fbc116" />
            <path d="M18 18L2.400 9A18 18 0 0 1 33.600 9z" fill="#e33b2e" />
            <path d="M2.400 9A18 18 0 0 0 18 36l7.800-13.500L18 18z" fill="#229342" />
            <path d="M18 9h15.600A18 18 0 0 1 18 36l8-13.500z" fill="#fbc116" />
            <circle cx="18" cy="18" r="9" fill="#fff" />
            <circle cx="18" cy="18" r="7.200" fill="#2c7bed" />
          </Svg>
        </AppSlot>
        <AppSlot indicator="dot">
          <Svg w={36}>
            <path d="M26.500 0v10L6 26.500c-1 .7-2 .5-2.800-.3L.8 24a1.800 1.800 0 0 1 0-2.700z" fill="#0b76c4" />
            <path d="M26.500 36V26L6 9.500c-1-.7-2-.5-2.800.3L.8 12a1.800 1.800 0 0 0 0 2.700z" fill="#1287d8" />
            <path d="M26.500 0L35 4a1.800 1.800 0 0 1 1 1.700v24.600a1.800 1.800 0 0 1-1 1.700l-8.500 4z" fill="#27a5f2" />
          </Svg>
        </AppSlot>
      </div>
      <Svg w={20} h={12} className="mb-[2px] ml-[115px]"><path d="M1.500 10.500L10 2l8.500 8.500" stroke="#fff" strokeWidth="1.500" /></Svg>
      <div className="ml-[22px] w-[38px] text-center text-[17px] leading-[23px] tracking-[-0.1px]">ENG<br />IN</div>
      <Svg w={26} h={20} className="mb-[3px] ml-[25px]">
        <path d="M1.500 8a16.500 16.500 0 0 1 23 0M5 12a11.500 11.500 0 0 1 16 0M8.500 15.500a6.500 6.500 0 0 1 9 0" stroke="#fff" strokeWidth="1.700" />
        <circle cx="13" cy="17" r="2.200" fill="#fff" />
      </Svg>
      <Svg w={26} h={20} className="mb-[1px] ml-[10px]">
        <path d="M1.500 6.500H5L11 1.500v17L5 13.500H1.500z" stroke="#fff" strokeWidth="1.700" />
        <path d="M15 6l8 8M23 6l-8 8" stroke="#fff" strokeWidth="1.700" />
      </Svg>
      <Svg w={26} h={20} className="mb-[3px] ml-[10px]">
        <path d="M12 4.500h7.500A2.500 2.500 0 0 1 22 7v8a2.500 2.500 0 0 1-2.500 2.500h-10A2.500 2.500 0 0 1 7 16" stroke="#fff" strokeWidth="1.700" />
        <path d="M22.500 8.500h2v5h-2zM10 8h5.500v7H8.500v-3z" fill="#fff" />
        <path d="M1 4.500h8V8a3 3 0 0 1-3 3H4a3 3 0 0 1-3-3z" fill="#fff" />
        <path d="M3 1v4M7 1v4M5 10v8" stroke="#fff" strokeWidth="1.700" />
      </Svg>
      <div className="mb-[2px] ml-[16px] w-[98px] text-right text-[17px] leading-[23px] tracking-[0.25px] whitespace-nowrap">11:28<br />02-04-2024</div>
      <div className="mb-[2px] ml-[12px] flex size-6 shrink-0 items-center justify-center rounded-full bg-[#4cc2ff] text-[16px] leading-none text-[#10243a]">3</div>
    </footer>
  );
}

export default function App() {
  return (
    <div className="flex h-[1080px] w-[1920px] flex-col overflow-hidden bg-[#c8dfe3] [font-family:'Open_Sans','Noto_Sans',sans-serif]">
      <TabStrip />
      <div className="flex h-[960px] shrink-0">
        <div className="flex w-[1860px] flex-col">
          <Toolbar />
          <Bookmarks />
          <div className="mr-[6px] mb-[6px] ml-[6px] flex min-h-0 flex-1 flex-col">
            <WebPage />
          </div>
        </div>
        <Sidebar />
      </div>
      <Taskbar />
    </div>
  );
}
